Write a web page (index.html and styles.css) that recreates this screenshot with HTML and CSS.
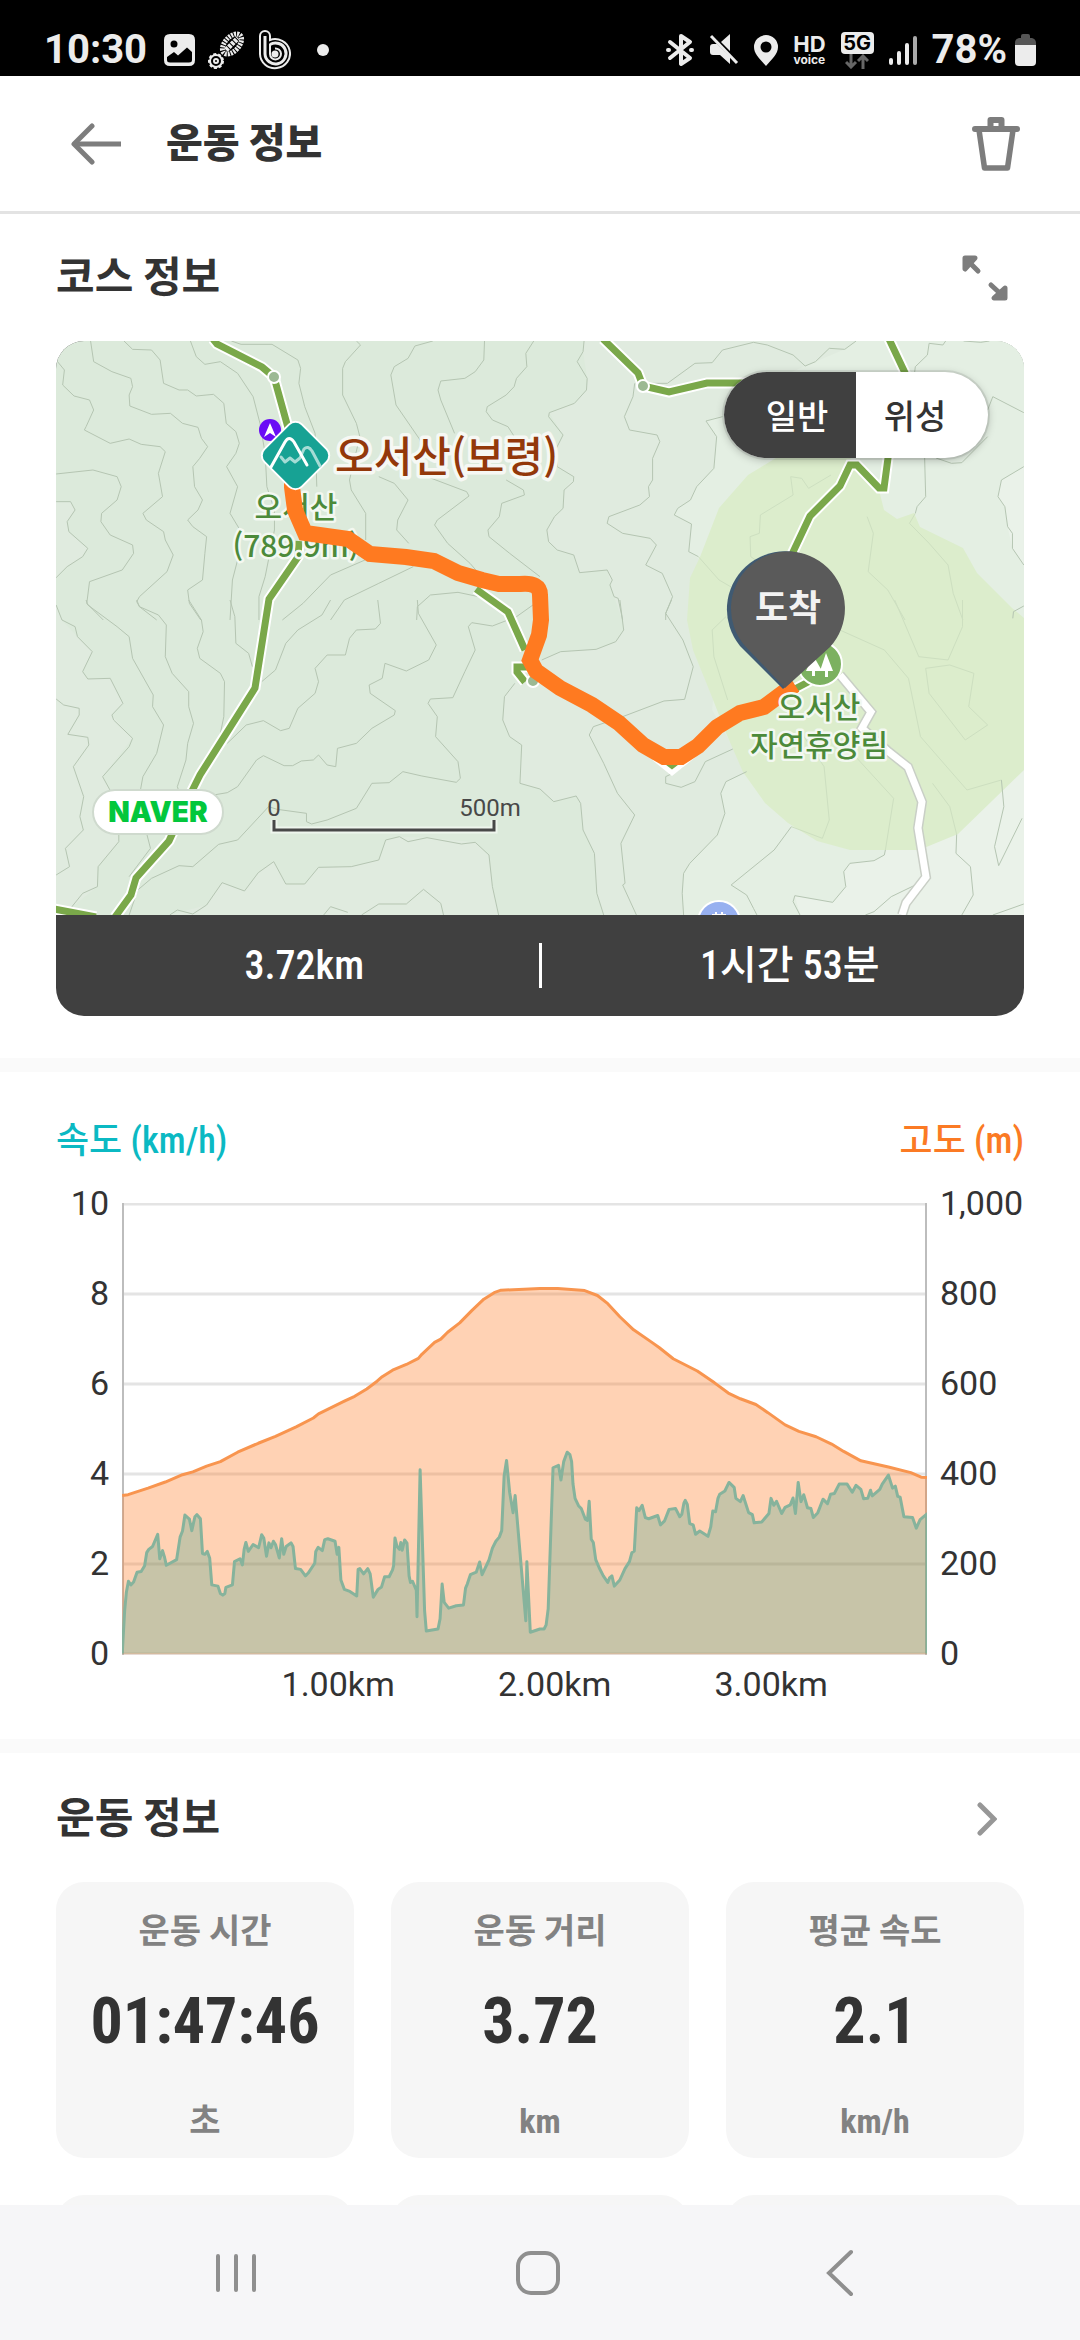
FILE: index.html
```html
<!DOCTYPE html>
<html lang="ko">
<head>
<meta charset="utf-8">
<meta name="viewport" content="width=device-width, initial-scale=1">
<title>운동 정보</title>
<link rel="stylesheet" href="styles.css">
</head>
<body>
<div class="status">
  <div class="status-left">
    <span class="status-text">10:30</span>
    <svg class="ic-image" width="31" height="32" viewBox="0 0 31 32"><path fill="#ececec" fill-rule="evenodd" d="M6 0H25Q31 0 31 6V26Q31 32 25 32H6Q0 32 0 26V6Q0 0 6 0ZM10 6.500A3.500 3.500 0 1 0 10 13.500A3.500 3.500 0 1 0 10 6.500ZM3 23V26Q3 28.500 6 28.500H25Q28 28.500 28 26V18L23 13.500L14 21.500L10 18Z"/></svg>
    <svg class="ic-boot" width="38" height="38" viewBox="0 0 38 38" fill="none" stroke="#ececec"><ellipse cx="24" cy="13" rx="7" ry="12" transform="rotate(42 24 13)" stroke-width="5" stroke-dasharray="2 1"/><path d="M18 19L30 7" stroke-width="5" stroke-dasharray="3 1"/><circle cx="8" cy="30" r="6" stroke-width="2"/><circle cx="8" cy="30" r="7" stroke-width="2" stroke-dasharray="3 2"/><circle cx="8" cy="30" r="2" stroke-width="2"/></svg>
    <svg class="ic-b" width="32" height="40" viewBox="0 0 32 40" fill="none" stroke="#ececec" stroke-width="2"><path d="M1 6A4.500 4.500 0 0 1 11 6V10A15 14.500 0 1 1 1 24Z"/><path stroke-width="3" d="M6 6V24A10.500 10.500 0 1 0 11 14.500"/><path stroke-width="2" d="M11 14V24A5.500 5.500 0 1 0 16 18.500"/><circle cx="16" cy="24" r="2.500" fill="#ececec"/></svg>
    <span class="dot"></span>
  </div>
  <div class="status-right">
    <svg width="28" height="34" viewBox="0 0 28 34" fill="none" stroke="#ececec" stroke-width="4" stroke-linecap="round" stroke-linejoin="round"><path d="M4 9L24 25L15 31V3L24 9L4 25"/><path d="M2 17H3M25 17H26"/></svg>
    <svg width="30" height="32" viewBox="0 0 30 32"><path fill="#ececec" d="M21 0V17L12 8ZM1 13Q1 10 4 10H8L21 23V30L11 21H4Q1 21 1 18Z"/><path d="M2 2L28 29" stroke="#ececec" stroke-width="3"/></svg>
    <svg width="24" height="31" viewBox="0 0 24 31"><path fill="#ececec" fill-rule="evenodd" d="M12 0A12 12 0 0 1 24 12C24 19 18 24 12 31C6 24 0 19 0 12A12 12 0 0 1 12 0ZM12 6.500A5.500 5.500 0 1 0 12 17.500A5.500 5.500 0 1 0 12 6.500Z"/></svg>
    <span class="hd"><b>HD</b><small>voice</small></span>
    <span class="net"><b>5G</b><svg width="24" height="15" viewBox="0 0 24 15" fill="none" stroke="#666" stroke-width="3"><path d="M6 0V13M1 8L6 13L11 8M18 15V2M13 7L18 2L23 7"/></svg></span>
    <svg width="28" height="31" viewBox="0 0 28 31" stroke-width="4" stroke-linecap="round" stroke="#ececec"><path d="M2 25V28M10 18V28M18 10V28"/><path d="M26 3V28" stroke="#aaa"/></svg>
    <span class="status-text">78%</span>
    <svg class="ic-bat" width="21" height="32" viewBox="0 0 21 32"><path fill="#555" d="M6 2Q6 0 8 0H13Q15 0 15 2V4H17Q21 5 21 9V14H0V9Q0 5 4 4H6Z"/><path fill="#ececec" d="M0 11H21V28Q21 32 17 32H4Q0 32 0 28Z"/></svg>
  </div>
</div>

<header class="appbar">
  <button class="icon-btn" aria-label="뒤로"><svg width="52" height="42" viewBox="0 0 52 42" fill="none" stroke="#7d7d7d" stroke-width="5"><path d="M51 21H4"/><path d="M22 3L4 21L22 39" stroke-linecap="round" stroke-linejoin="round"/></svg></button>
  <h1>운동 정보</h1>
  <button class="icon-btn trash" aria-label="삭제"><svg width="48" height="54" viewBox="0 0 48 54" fill="none" stroke="#7d7d7d" stroke-width="6" stroke-linecap="round" stroke-linejoin="round"><path d="M3 12H45M18.500 11V3H29.500V11"/><path d="M7 13L12.500 51H35.500L41 13" stroke-width="5.500"/></svg></button>
</header>

<main>
  <section class="course">
    <div class="section-head">
      <h2>코스 정보</h2>
      <button class="icon-btn expand" aria-label="지도 확대"><svg width="46" height="46" viewBox="0 0 46 46" stroke="#7d7d7d" stroke-width="5" stroke-linecap="round" stroke-linejoin="round"><path fill="#7d7d7d" d="M3 14V3H13Z M32 43H43V33Z"/><path d="M5 5L16 16M29 30L41 41"/></svg></button>
    </div>
    <div class="map-card">
      <div class="map">
        <svg class="map-art" viewBox="0 0 968 574" preserveAspectRatio="xMidYMid slice" role="img" aria-label="오서산 코스 지도">
          <rect width="968" height="574" fill="#dceadb"/>
          <!-- elevation shading -->
          <g transform="translate(-56 -121) scale(.34435 .33333)"><path fill="#e0ebdf" d="M163 762L163 1073L195 1040L240 1010L255 985L200 935L195 905L218 870L205 845L163 845Z"/></g>
          <g transform="translate(484 -121) scale(.34435 .33333)">
            <path fill="#e0ebdf" d="M128 363L125 395L137 475L135 510L100 550L27 578L67 645L45 690L50 740L98 770L70 810L67 865L42 890L20 930L25 965L50 990L98 1005L115 1058L195 1050L215 1130L240 1203H1410V360Z"/>
            <path fill="#e4efe3" d="M918 363L885 388L800 425L770 438L700 470L600 560L482 603L513 650L505 745L455 800L437 840L400 865L390 885L440 912L432 995L480 1030L520 1080L520 1203H1410V360Z"/>
            <path fill="#eaf2e9" d="M1405 740L1340 780L1330 830L1350 860L1358 920L1372 985L1405 1035Z"/>
          </g>
          <g transform="translate(-56 259) scale(.34435 .33333)" fill="#e0ebdf">
            <path d="M163 15L180 60L225 110L268 155L240 215L255 237L320 235L357 310L325 345L385 415L298 530L322 575L345 725L285 800L283 860L205 925H163Z"/>
            <path d="M1572 180L1495 250L1465 290L1460 360L1480 410L1515 435L1510 550L1572 567Z"/>
            <path d="M493 945L600 915L645 848L710 873L750 818L795 785L830 852L885 852L925 802L1020 800L1100 780L1120 720L1160 710L1240 713L1380 727L1420 765L1430 860L1448 945Z"/>
          </g>
          <g transform="translate(484 259) scale(.34435 .33333)">
            <path fill="#e0ebdf" d="M240 59L243 90L220 125L163 148L60 155L0 180V567L40 605L105 588L118 610L125 690L158 760L165 880L185 945H1410V59Z"/>
            <path fill="#e4efe3" d="M520 59L500 330L600 515L540 545L525 580L537 640L515 705L435 790L417 820L413 880L417 945H1410V59Z"/>
            <path fill="#eaf2e9" d="M1003 740L1000 765L970 782L900 790L882 815L888 860L850 907L740 887L755 945H1410V500Z"/>
          </g>
          <path fill="#dcedcc" d="M720 117L692 134L663 167L644 216L634 237L631 279L637 309L656 356L670 392L687 431L709 462L732 482L761 500L794 509H863L902 493L968 429V277L956 267L921 232L907 207L864 186L858 172L841 178L828 169L823 149L794 117Z"/>
          <!-- contour lines -->
          <g class="contour" transform="translate(-56 -121) scale(.34435 .33333)">
            <path d="M263 363L272 425L325 455L380 475L385 500L375 525L377 558L440 583L495 580L530 610L575 622L585 655L603 680L580 715L560 740L565 800L588 840L575 870L545 900L560 920L600 950L595 1000L588 1080L545 1110L550 1150L583 1200"/>
            <path d="M360 363L385 388L440 390L465 420L475 490L520 510L545 510L570 528L620 523L650 550L657 610L685 635L695 670L685 700L658 740L690 800L668 880L697 930L690 1020L675 1080L668 1200"/>
            <path d="M553 363L570 410L595 433L640 425L690 460L735 530L755 610L770 700L775 800L797 870L797 930L770 1070L752 1130V1200"/>
            <path d="M672 363L700 373H790L865 420L873 445L868 490L885 560L915 640L920 800"/>
            <path d="M163 420L187 450L182 495L215 528L260 540L272 570L250 620L245 630L320 670L375 657L410 673L465 680L480 695L460 760L472 830L415 880L425 900L475 935L480 960L503 1005L485 1055L405 1130L397 1145L405 1160L455 1200"/>
            <path d="M163 762L270 750L340 770L352 800L340 840L295 880L293 905L320 945L385 975L388 1000L355 1050L260 1085L252 1150L300 1200"/>
            <path d="M163 845H205L218 870L195 905L200 935L255 985L240 1010L195 1040L163 1073"/>
            <path d="M1035 363L1047 375L1003 425L995 445V525L1035 610L1045 650L1015 780L1020 810L1062 880V960"/>
            <path d="M1257 363L1205 378L1185 415L1145 440L1135 465L1150 555L1220 660L1240 770L1355 815L1362 828L1270 900L1262 915L1300 970L1365 1030L1390 1060"/>
            <path d="M1407 363L1405 420L1380 455L1350 475L1280 483L1272 510L1280 540L1320 640"/>
            <path d="M1550 363L1527 400L1530 440L1500 475L1493 500L1470 525L1415 560L1412 575L1430 600L1475 620L1500 660"/>
            <path d="M1100 770L1145 790L1185 840L1155 900L1152 930L1187 970"/>
            <path d="M1470 780L1520 810L1523 825L1457 850L1450 890L1417 930L1420 950L1480 1000L1568 1070"/>
            <path d="M820 1200L880 1150L960 1065L1060 1020M960 1200L1000 1140L1100 1090L1200 1040M1210 1200L1212 1160L1250 1125L1330 1117L1390 1130"/>
          </g>
          <g class="contour" transform="translate(484 -121) scale(.34435 .33333)">
            <path d="M128 363L125 395L108 425L137 475L135 510L100 550L27 578L25 590L67 645L45 690L50 740L98 770L97 785L70 810L67 865L42 890L20 930L25 965L50 990L98 1005L115 1058L195 1050L210 1080L203 1095L215 1130L227 1135L240 1200"/>
            <path d="M298 490H370L450 430L500 428L530 390L620 367L660 375L735 405L770 438L800 425L840 385L885 388L918 363"/>
            <path d="M275 490L270 530L245 590L260 630L340 645L348 665L327 715V780L315 800L318 830L290 855L200 890L195 910L240 940L320 955L338 975L307 1035L355 1060L385 1130L365 1180V1200"/>
            <path d="M530 590L482 603L513 650L505 745L455 800L437 840L400 865L390 885L440 912L432 995L460 1010"/>
            <path d="M1088 456L1090 440L1125 405L1130 370L1170 375L1178 363M1230 363L1280 367L1305 363M1300 570L1315 530L1405 578M1150 714L1195 730L1225 728L1300 650"/>
            <path d="M1117 714L1120 830L1095 860L1090 880M1405 740L1340 780L1330 830L1350 860L1358 920L1372 940V985L1405 1035"/>
            <g class="faint"><path d="M460 1010L520 1080L570 1110M728 770L735 825L640 885L637 940L610 950L612 1010L640 1030M728 770L760 775L780 805L845 765M950 890L968 940L953 1055L1010 1110L1060 1200M1090 880L1073 910L1130 970L1185 1035L1200 1120L1228 1200"/></g>
          </g>
          <g class="contour" transform="translate(-56 259) scale(.34435 .33333)">
            <path d="M163 15L180 60L218 80L225 110L268 155L240 215L255 237L320 235L357 310L325 345L330 360L385 415L375 440L298 530L322 575L345 703V725L285 800L283 860L240 880L205 925"/>
            <path d="M163 297L185 315L230 325V345L197 403L255 412L258 435L213 500L243 590L232 650L242 690L190 745L202 800L163 825"/>
            <path d="M250 0L255 15L340 80L375 110L385 175L445 285L443 320L475 375L455 460L415 530L407 575L427 705L437 745L375 830"/>
            <path d="M397 0L405 20L460 45L483 75L480 170L500 220L548 275V320L562 370L545 430L540 480L515 560L520 575"/>
            <path d="M548 0L585 60L590 95L573 145L580 175L640 220L652 245L650 350L640 400M668 0L682 50L685 130L722 160L733 200M960 0L935 45L865 90L830 130L800 210L760 245"/>
            <path d="M1097 0L1105 70L1090 87L1035 90L1015 115L1003 165H950L915 205L925 245L915 280L865 325L840 385L815 392L765 362L715 375L660 430"/>
            <path d="M620 585L660 578L690 560L745 480L765 467L825 497H850L875 483L910 480L925 465L950 495L975 500L980 445L1035 430L1080 385L1145 345L1148 332L1075 280L1072 255L1110 235L1118 190L1180 213L1245 180L1267 135L1215 40L1212 0"/>
            <path d="M1568 0L1500 50L1430 78L1370 68L1360 80L1380 150L1350 215L1315 293L1250 297L1243 310L1270 350L1265 410L1330 485L1337 535L1325 547L1225 528L1170 515L1130 548L1080 550L1035 625L950 660L905 672L890 665V640L805 628L780 620L690 720L635 733L560 800L520 797L440 835L400 870L375 945"/>
            <path d="M1495 250L1465 290L1460 360L1480 410L1515 435L1510 550L1568 567"/>
            <path d="M493 945L515 930L560 942L600 915L645 848L710 873L750 818L795 785L830 852L885 852L925 802L1020 800L1100 780L1120 720L1160 710L1185 725L1240 713L1340 732L1380 727L1420 765L1430 860L1448 945M940 945L960 920L1010 937M1050 945L1100 912L1180 912L1230 868L1280 910L1288 945"/>
          </g>
          <g class="contour" transform="translate(484 259) scale(.34435 .33333)">
            <path d="M232 0L243 90L220 125L163 148L60 155L5 180M382 0L365 40L415 120L445 200L420 298L360 303L240 350L155 380L143 405L185 490L225 580L275 645L235 730L247 850L240 855L280 945"/>
            <path d="M0 567L40 605L105 588L118 610L125 690L158 760L165 880L185 945M415 500L395 515L365 530V550L410 562L450 545L480 485L560 447"/>
            <path d="M600 515L540 545L525 580L537 640L515 705L435 790L417 820L413 880L417 945M730 680L680 750L555 855L600 885L620 925L630 945"/>
            <path d="M1003 750L1000 765L970 782L900 790L882 815L888 860L850 907L740 887L735 905L755 945M1405 18L1375 35L1373 55M1210 703L1208 760L1250 800L1258 885L1225 945"/>
            <path d="M1340 540L1347 620L1320 740L1332 797L1400 655M1405 912L1315 945M945 945L970 935L1020 890L1110 845"/>
            <g class="faint"><path d="M540 50L500 90L505 170L545 300M860 85L1000 150L1070 235L1105 410L1240 570L1340 540M1030 0L1100 170L1185 180L1227 80V0M1190 195L1260 220L1245 320L1300 375L1235 420L1130 280L1120 205ZM760 400L825 500L840 660L820 715L730 680M890 440L1027 595L1003 750M1140 550L1190 620L1210 703"/></g>
          </g>
          <!-- road -->
          <path class="line" stroke="#c9cfc6" stroke-width="10" d="M784 334L815 371L806 387L833 411L852 426L866 461L862 487L870 536L850 562L846 574"/>
          <path class="line" stroke="#fff" stroke-width="7" d="M784 334L815 371L806 387L833 411L852 426L866 461L862 487L870 536L850 562L846 574"/>
          <!-- trails -->
          <g class="line" stroke="#fff" stroke-width="11">
            <path d="M157 -2L161 3L206 26L218 36L231 83L240 115M243 200L242 216L213 258L199 347L144 434L135 452L113 500L80 537L75 554L59 576M-2 568L40 576M420 248L452 271L469 309M472 326H461V331L469 341M547 -2L582 32L587 45L613 51L651 42H690M833 -2L850 34L832 117L828 147H823L801 124H794L784 145L754 175L737 211L736 240M600 415L616 428L636 412M735 350L754 340"/>
          </g>
          <g class="line" stroke="#7aa84a" stroke-width="7">
            <path d="M157 -2L161 3L206 26L218 36L231 83L240 115M243 200L242 216L213 258L199 347L144 434L135 452L113 500L80 537L75 554L59 576M-2 568L40 576M420 248L452 271L469 309M472 326H461V331L469 341M547 -2L582 32L587 45L613 51L651 42H690M833 -2L850 34L832 117L828 147H823L801 124H794L784 145L754 175L737 211L736 240M604 415L616 424L632 412M735 350L754 340"/>
          </g>
          <g fill="#9cb993" stroke="#fff" stroke-width="2"><circle cx="218" cy="36" r="6"/><circle cx="587" cy="45" r="6"/><circle cx="477" cy="340" r="6"/></g>
          <g class="poi" text-anchor="middle">
            <text x="240" y="177">오서산</text><text x="240" y="216">(789.9m)</text>
          </g>
          <path class="line" stroke="#ff7a20" stroke-width="16" d="M236 130V146L239 169L249 192L292 198L314 213L350 216L378 220L402 232L426 239L443 243H464Q484 241 484 254L485 279L483 294L474 319L480 330L504 347L536 364L563 382L587 404L608 416H625L642 405L661 386L684 372L708 366L728 351L739 344"/>
          <g class="poi" text-anchor="middle"><text x="763" y="377">오서산</text><text x="763" y="415">자연휴양림</text></g>
          <circle cx="764" cy="323" r="22" fill="#7cb160" stroke="#fff" stroke-width="2"/>
          <path fill="#fff" d="M757 314L750 330H756V335H759V330H766ZM770 312L764 330H769V336H772V330H777Z"/>
          <circle cx="663" cy="581" r="21" fill="#97b0f0" stroke="#fff" stroke-width="2"/>
          <path d="M656 574H670M660 571V576M666 571V576" stroke="#fff" stroke-width="2"/>
          <!-- finish pin -->
          <path fill="#3f5a72" d="M727 348L684 305A58 58 0 1 1 773 306Z"/>
          <path fill="#5a5a5a" d="M729 347L689 305A57 57 0 1 1 774 306Z"/>
          <text class="pin" x="732" y="280" text-anchor="middle">도착</text>
          <!-- summit marker -->
          <circle cx="214" cy="89" r="11" fill="#6a0df5"/><path fill="#fff" d="M214 82L220 96L214 92L208 96Z"/>
          <rect x="213" y="88" width="53" height="53" rx="9" transform="rotate(45 239.500 114.500)" fill="#17a294" stroke="#fff" stroke-width="2"/>
          <g fill="none" stroke-width="3" stroke-linecap="round" stroke-linejoin="round"><path stroke="#a5dcd5" d="M225 116L229 121L234 117L239 121L244 117L248 108Q252 104 256 110L264 125"/><path stroke="#fff" d="M215 126L229 101Q233 94 238 101L251 124"/></g>
          <text class="summit" x="279" y="131">오서산(보령)</text>
          <g class="scale"><text x="218" y="475" text-anchor="middle">0</text><text x="434" y="475" text-anchor="middle">500m</text>
          <path d="M218 479V489H438V479" fill="none" stroke="#eef5ed" stroke-width="7"/><path d="M218 479V489H438V479" fill="none" stroke="#484848" stroke-width="3"/></g>
        </svg>
        <a class="naver" href="#naver">NAVER</a>
        <div class="toggle"><button aria-pressed="true" class="on">일반</button><button aria-pressed="false">위성</button></div>
      </div>
      <div class="map-bar"><span>3.72km</span><i></i><span>1시간 53분</span></div>
    </div>
  </section>

  <section class="chart-section">
    <div class="chart-titles"><h3 class="speed">속도 (km/h)</h3><h3 class="alt">고도 (m)</h3></div>
    <div class="chart">
      <div class="ticks left"><span>10</span><span>8</span><span>6</span><span>4</span><span>2</span><span>0</span></div>
      <svg class="plot" viewBox="0 0 805 452" preserveAspectRatio="none" role="img" aria-label="속도와 고도 그래프">
        <path d="M0 1H805M0 91H805M0 181H805M0 271H805M0 361H805M0 451H805" stroke="#e4e4e4" stroke-width="3"/>
        <path d="M1 0V452M804 0V452" stroke="#bdbdbd" stroke-width="2"/>
        <g transform="translate(-122 -123) scale(.34435 .40816)" stroke-linejoin="round">
          <path fill="#ff7a22" fill-opacity=".34" d="M355 1407V1018L372 1016L430 1000L480 985L530 967L560 960L600 946L640 935L690 912L750 890L800 873L860 850L910 828L925 818L1000 787L1030 775L1065 757L1095 738L1110 727L1140 711L1180 697L1215 682L1225 672L1262 643L1280 635L1300 618L1335 595L1370 565L1405 537L1435 521L1455 515L1568 511L1620 511L1698 516L1735 528L1765 548L1800 580L1840 612L1890 641L1915 656L1955 683L2025 713L2075 742L2115 767L2150 781L2195 795L2230 815L2280 845L2320 861L2370 874L2415 892L2450 910L2500 933L2580 948L2645 962L2675 973L2692 974V1407Z"/>
          <path class="curve" stroke="#f8954f" d="M355 1018L372 1016L430 1000L480 985L530 967L560 960L600 946L640 935L690 912L750 890L800 873L860 850L910 828L925 818L1000 787L1030 775L1065 757L1095 738L1110 727L1140 711L1180 697L1215 682L1225 672L1262 643L1280 635L1300 618L1335 595L1370 565L1405 537L1435 521L1455 515L1568 511L1620 511L1698 516L1735 528L1765 548L1800 580L1840 612L1890 641L1915 656L1955 683L2025 713L2075 742L2115 767L2150 781L2195 795L2230 815L2280 845L2320 861L2370 874L2415 892L2450 910L2500 933L2580 948L2645 962L2675 973L2692 974"/>
          <path class="curve speed-area" stroke="#86b39c" fill-opacity=".23" d="M355 1405L362 1300L367 1255L373 1228L380 1237L388 1230L398 1206L410 1204L420 1190L426 1158L432 1150L443 1143L458 1113L464 1173L472 1153L478 1170L483 1189L513 1175L523 1120L530 1105L537 1066L550 1076L557 1104L566 1070L572 1065L582 1075L588 1160L595 1162L602 1155L609 1172L615 1237L633 1240L640 1258L647 1262L653 1258L656 1243L675 1237L681 1180L697 1173L704 1188L709 1150L714 1133L721 1155L735 1138L751 1146L760 1114L766 1122L774 1167L781 1134L787 1146L794 1130L800 1138L811 1171L818 1124L824 1162L831 1143L845 1134L851 1143L858 1197L873 1199L887 1215L895 1208L914 1184L917 1155L924 1145L936 1153L943 1126L952 1124L973 1130L979 1162L984 1145L990 1225L1000 1248L1016 1253L1036 1264L1040 1199L1045 1197L1056 1210L1068 1197L1075 1210L1084 1267L1098 1248L1108 1242L1117 1217L1130 1217L1140 1200L1143 1190L1147 1122L1153 1143L1160 1150L1164 1133L1168 1152L1175 1127L1182 1135L1188 1215L1192 1231L1198 1228L1209 1250L1211 1315L1220 955L1233 1300L1238 1350L1272 1345L1278 1320L1284 1235L1290 1280L1303 1294L1325 1288L1346 1286L1352 1245L1357 1235L1366 1212L1383 1206L1393 1181L1400 1212L1420 1176L1430 1147L1440 1130L1450 1120L1457 1104L1464 970L1471 932L1480 1010L1490 1060L1496 1018L1527 1325L1530 1180L1540 1353L1568 1345L1580 1345L1586 1335L1592 1295L1606 950L1622 944L1629 980L1637 935L1647 912L1655 918L1660 935L1664 990L1670 1025L1680 1043L1688 1050L1700 1076L1706 1079L1711 1032L1717 1125L1723 1133L1730 1175L1740 1195L1752 1215L1765 1231L1770 1220L1777 1215L1784 1240L1800 1225L1815 1197L1828 1180L1835 1158L1842 1154L1849 1048L1856 1055L1865 1042L1874 1072L1884 1075L1910 1067L1918 1090L1930 1080L1943 1052L1962 1050L1974 1070L1980 1064L1986 1037L1990 1030L1996 1040L2003 1087L2013 1090L2020 1113L2032 1105L2056 1118L2064 1095L2070 1056L2078 1058L2085 1025L2090 1015L2105 1007L2117 986L2132 998L2137 1025L2150 1033L2158 1018L2174 1060L2185 1065L2190 1085L2212 1083L2233 1062L2239 1025L2247 1042L2255 1032L2270 1062L2280 1047L2295 1041L2303 1024L2310 1062L2318 986L2326 1033L2334 1016L2345 1048L2355 1050L2362 1072L2375 1060L2390 1027L2403 1038L2412 1015L2423 1013L2437 990L2460 990L2475 1010L2486 993L2500 1003L2508 1026L2520 1025L2528 1005L2533 1019L2555 1003L2562 990L2580 968L2592 1000L2600 995L2607 1020L2614 1022L2625 1070L2650 1072L2661 1098L2672 1077L2692 1063V1405"/>
        </g>
      </svg>
      <div class="ticks right"><span>1,000</span><span>800</span><span>600</span><span>400</span><span>200</span><span>0</span></div>
      <div class="xticks"><span>1.00km</span><span>2.00km</span><span>3.00km</span></div>
    </div>
  </section>

  <section class="workout">
    <div class="section-head">
      <h2>운동 정보</h2>
      <button class="icon-btn more" aria-label="더보기"><svg width="20" height="34" viewBox="0 0 20 34" fill="none" stroke="#979797" stroke-width="5" stroke-linecap="round"><path d="M3 3L17 17L3 31"/></svg></button>
    </div>
    <div class="cards">
      <div class="card"><span>운동 시간</span><strong>01:47:46</strong><span>초</span></div>
      <div class="card"><span>운동 거리</span><strong>3.72</strong><span>km</span></div>
      <div class="card"><span>평균 속도</span><strong>2.1</strong><span>km/h</span></div>
      <div class="card"></div><div class="card"></div><div class="card"></div>
    </div>
  </section>
</main>

<nav class="navbar">
  <button aria-label="최근 앱"><svg width="42" height="46" viewBox="0 0 42 46" stroke="#8f8f8f" stroke-width="4" stroke-linecap="round"><path d="M3 6V40M21 6V40M39 6V40"/></svg></button>
  <button aria-label="홈"><svg width="46" height="46" viewBox="0 0 46 46" fill="none" stroke="#8f8f8f" stroke-width="4"><rect x="3" y="3" width="40" height="40" rx="13"/></svg></button>
  <button aria-label="뒤로"><svg width="28" height="48" viewBox="0 0 28 48" fill="none" stroke="#8f8f8f" stroke-width="4" stroke-linecap="round"><path d="M25 3L3 24L25 45"/></svg></button>
</nav>
</body>
</html>
```
FILE: styles.css
```css
* { box-sizing: border-box; margin: 0; padding: 0; }
html, body { height: 100%; }
body {
  display: flex;
  flex-direction: column;
  height: 100vh;
  overflow: hidden;
  background: #fff;
  color: #333;
  font-family: "Roboto Condensed", "Noto Sans CJK KR", "Noto Sans", sans-serif;
}
button { border: 0; background: none; font: inherit; color: inherit; cursor: pointer; }
svg { display: block; flex: none; }

/* system status bar */
.status {
  display: flex;
  flex: none;
  justify-content: space-between;
  align-items: center;
  height: 76px;
  padding: 24px 44px 0 44px;
  background: #000;
  color: #ececec;
}
.status-left, .status-right { display: flex; align-items: center; }
.status-text { font: 700 40px/48px Roboto, sans-serif; }
.ic-image { margin-left: 17px; }
.ic-boot { margin-left: 13px; }
.ic-b { margin-left: 13px; }
.dot { width: 12px; height: 12px; margin-left: 26px; border-radius: 50%; background: #ececec; }
.status-right { gap: 15px; }
.hd, .net { display: flex; flex-direction: column; align-items: center; }
.hd b { font: 700 22px/20px Inter, sans-serif; }
.hd small { font: 700 12px/12px Inter, sans-serif; }
.net b {
  width: 33px;
  border-radius: 4px;
  background: #ececec;
  color: #000;
  font: 700 20px/22px Inter, sans-serif;
  text-align: center;
}
.ic-bat { margin-left: -7px; }

/* app bar */
.appbar {
  display: flex;
  flex: none;
  align-items: center;
  height: 138px;
  padding: 0 60px 0 70px;
  border-bottom: 3px solid #e3e3e3;
}
.appbar h1 { flex: 1; margin-left: 44px; font-size: 40px; line-height: 56px; font-weight: 900; }

main { flex: 1; min-height: 0; overflow: hidden; }
section { padding: 0 56px; }
.section-head { display: flex; align-items: center; justify-content: space-between; height: 127px; }
h2 { font-size: 42px; line-height: 60px; font-weight: 700; }
.expand { margin-right: 16px; }
.more { margin-right: 27px; }

/* course map */
.course { padding-bottom: 42px; }
.map-card { overflow: hidden; border-radius: 28px; background: #404040; }
.map { position: relative; height: 574px; }
.map-art { width: 100%; height: 100%; }
.contour path { fill: none; stroke: #b5c5b2; stroke-width: 1px; stroke-linejoin: round; vector-effect: non-scaling-stroke; }
.contour .faint path { stroke: #cddfc0; }
.line { fill: none; }
.map-art text { font-family: "Noto Sans CJK KR", sans-serif; }
.poi { fill: #4c8a3a; font-size: 30px; font-weight: 500; stroke: #f3f8f1; stroke-width: 5px; stroke-linejoin: round; paint-order: stroke; }
.pin { fill: #f2f2f2; font-size: 36px; font-weight: 700; }
.summit { fill: #93380a; font-size: 42px; font-weight: 500; stroke: #f6f8f4; stroke-width: 7px; stroke-linejoin: round; paint-order: stroke; }
.map-art .scale text { fill: #484848; font: 400 24px Roboto, sans-serif; }
.naver {
  position: absolute;
  left: 36px;
  bottom: 80px;
  width: 132px;
  border: 2px solid #cfdace;
  border-radius: 24px;
  background: #fff;
  color: #03c73c;
  font: 900 28px/42px Inter, sans-serif;
  text-align: center;
  text-decoration: none;
}
.toggle {
  position: absolute;
  top: 31px;
  right: 36px;
  display: flex;
  overflow: hidden;
  border-radius: 43px;
  background: #fff;
  box-shadow: 0 2px 8px rgba(0, 0, 0, .25), 0 0 0 2px rgba(0, 0, 0, .08);
}
.toggle button { width: 132px; padding-right: 14px; font-family: "Noto Sans CJK KR", sans-serif; font-size: 34px; line-height: 86px; font-weight: 500; }
.toggle .on { padding: 0 0 0 14px; background: #404040; color: #fff; }
.map-bar { display: flex; align-items: center; height: 101px; color: #fff; }
.map-bar span { flex: 1; padding-left: 14px; font-size: 40px; line-height: 48px; font-weight: 500; text-align: center; }
.map-bar i { width: 3px; height: 45px; background: #fff; }

/* speed and altitude chart */
.chart-section { padding-top: 45px; padding-bottom: 35px; border: solid #fafafa; border-width: 14px 0; }
.chart-titles { display: flex; justify-content: space-between; }
h3 { font-size: 36px; line-height: 48px; font-weight: 500; }
.speed { color: #0bb9c3; }
.alt { color: #fb7a24; }
.chart {
  display: grid;
  grid-template-columns: 66px 1fr 97px;
  margin-top: 18px;
  font: 400 34px/40px Roboto, sans-serif;
}
.ticks { display: flex; flex-direction: column; justify-content: space-between; height: 490px; }
.ticks.left { padding-right: 13px; text-align: right; }
.ticks.right { padding-left: 13px; }
.plot { width: 100%; height: 452px; margin-top: 20px; }
.curve { fill: none; stroke-width: 3px; vector-effect: non-scaling-stroke; }
.speed-area { fill: #0e9682; }
.xticks {
  grid-column: 2;
  display: grid;
  grid-template-columns: 100fr 100fr 100fr 22fr;
  padding-left: 108px;
  margin-top: -9px;
  text-align: center;
}

/* workout summary */
.workout { padding-top: 2px; }
.cards { display: grid; grid-template-columns: repeat(3, 1fr); gap: 37px; }
.card {
  display: flex;
  flex-direction: column;
  align-items: center;
  gap: 31px;
  min-height: 276px;
  padding: 25px 0 13px;
  border-radius: 28px;
  background: #f6f6f6;
}
.card span { color: #828282; font-size: 34px; line-height: 48px; font-weight: 700; }
.card strong { margin-bottom: 8px; font-size: 64px; line-height: 72px; font-weight: 700; }

/* system navigation */
.navbar {
  display: grid;
  flex: none;
  grid-template-columns: repeat(3, 1fr);
  height: 135px;
  padding: 0 89px 0 85px;
  background: #f6f6f8;
}
.navbar button { display: flex; align-items: center; justify-content: center; }
```
